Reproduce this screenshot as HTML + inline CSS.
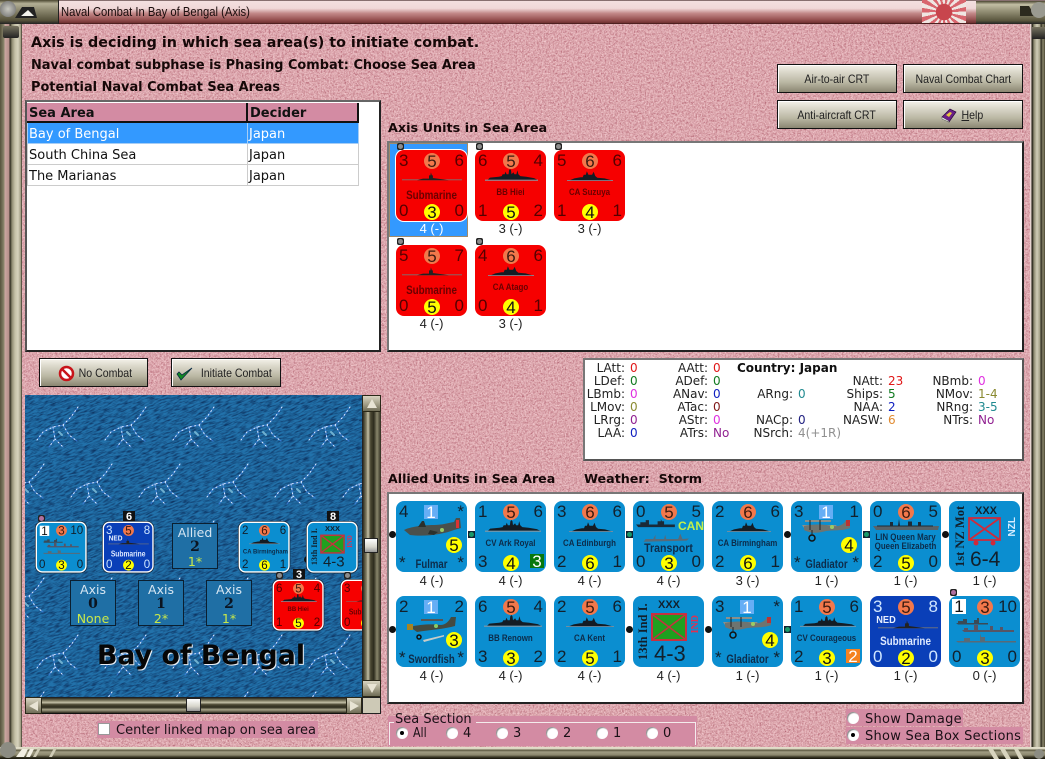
<!DOCTYPE html>
<html><head><meta charset="utf-8"><title>Naval Combat In Bay of Bengal (Axis)</title>
<style>
html,body{margin:0;padding:0;width:1045px;height:759px;overflow:hidden;background:#d9a3a9}
body{position:relative;font:13px "DejaVu Sans","Liberation Sans",sans-serif;color:#111}
.abs,.c,.c span,.c svg,.l,.m,.btn,.box,.flag{position:absolute}
.abs{white-space:nowrap}
.h{font-weight:bold;color:#160808}
.panel{position:absolute;background:#fff;border:2px solid #555;border-top-color:#666;border-right-color:#222;border-bottom-color:#222;box-sizing:border-box}
.btn{box-sizing:border-box;border:1px solid #111;background:linear-gradient(#f4f2ea 0,#dcd9cc 25%,#b9b6a2 65%,#8b8772 100%);box-shadow:inset 1px 1px 0 #fff;font:12px "Liberation Sans",sans-serif;color:#222;text-align:center;line-height:29px}
.btn span{display:inline-block;transform:scaleX(.88);white-space:nowrap;line-height:29px}
.c{width:71px;height:71px;border-radius:8px;background:#0b8ed0;font:17px/18px "Liberation Sans",sans-serif;color:#12202c;overflow:hidden}
.c.r{background:#f60000;color:#500}
.c.b{background:#0a3fb8}
.c.b span.a,.c.b span.t,.c.b span.d,.c.b span.e{color:#cfe6ff}
.a{left:3px;top:2px}.t{right:3px;top:2px}.d{left:3px;bottom:1px}.e{right:3px;bottom:1px}
.o,.y{left:28px;width:16px;height:16px;border-radius:50%;text-align:center;line-height:17px}
.o{top:3px;background:#f2784b;color:#3a1a10}.y{bottom:1px;background:#ff0;color:#111}
.n{left:0;width:71px;text-align:center;font-weight:bold;font-size:9px;line-height:10px;top:41px;color:#0d2c4a;transform:scaleX(.88)}
.r .n{color:#6a0000}
.c .nb{font-size:12px;line-height:12px;top:39px;font-weight:bold;transform:scaleX(.82)}
.pl{bottom:1px;left:0;width:71px;text-align:center;font-weight:bold;font-size:12px;line-height:14px;transform:scaleX(.8);color:#0d2c4a}
.q{left:28px;top:4px;width:14px;height:14px;background:#66aef5;color:#fff;text-align:center;line-height:15px}
.yy{width:16px;height:16px;border-radius:50%;background:#ff0;color:#111;text-align:center;line-height:17px;left:50px;top:36px}
.v{font:bold 12px/12px "Liberation Serif",serif;writing-mode:vertical-rl;transform:rotate(180deg);white-space:nowrap}
.l{width:71px;text-align:center;font:13px/14px "Liberation Sans",sans-serif;color:#222}
.m{width:7px;height:7px;background:#111;border-radius:50%}
.g{width:7px;height:7px;background:#123;border-radius:0;box-shadow:inset 0 0 0 1px #123}
.g::after{content:"";position:absolute;left:1px;top:1px;width:5px;height:5px;background:#1a9a6a;border-radius:50%}
.k{width:7px;height:7px;border-radius:2px;background:#222}
.k::after{content:"";position:absolute;left:1px;top:1px;width:5px;height:5px;background:#8c8c8c;border-radius:50%}
.pu::after{background:#b070a0}
.mini{transform:scale(.68);transform-origin:0 0;box-shadow:0 0 0 2px #fff,0 0 0 3px #123}
.box{box-sizing:border-box;width:46px;height:46px;background:#1f6fa5;border:1px solid #0b1f30;text-align:center;color:#d6e6f2;font:12.5px/15px "DejaVu Sans",sans-serif;padding-top:1px}
.box b{display:block;color:#0b1420;font:bold 14px/15px "DejaVu Serif","Liberation Serif",serif}
.box i{display:block;font-style:normal;color:#c8e84a;font-size:12.5px;line-height:14px}
.nm{position:absolute;width:12px;height:13px;background:#111;color:#fff;text-align:center;font:bold 11px/13px "Liberation Sans",sans-serif}
.i{position:absolute;white-space:nowrap;font:12px/13px "DejaVu Sans",sans-serif;color:#222}
.i u{display:inline-block;width:60px;text-align:right;text-decoration:none;margin-right:5px}
table{border-collapse:separate;border-spacing:0;position:absolute;left:27px;top:103px;width:332px;table-layout:fixed;font:13px "DejaVu Sans",sans-serif}
td,th{box-sizing:border-box;padding:2px 1px 0;text-align:left;overflow:hidden;white-space:nowrap}
td{height:21px;border-right:1px solid #ccc;border-bottom:1px solid #ccc}
td:first-child{border-left:1px solid #ccc}
th{background:#d38ba3;border-right:2px solid #111;border-bottom:2px solid #111;height:20px;font-weight:bold;color:#111;padding-left:2px}
tr.sel td{background:#3399ff;color:#fff;border-color:#a6cdf5}
.rd{position:absolute;width:12px;height:12px;border-radius:50%;background:#fff;box-shadow:inset 1px 1px 1px #888}
.rd.on::after{content:"";position:absolute;left:4px;top:4px;width:4px;height:4px;background:#000;border-radius:50%}
.pk{position:absolute;background:#d38ba3}
.vb{position:absolute;background:linear-gradient(90deg,#2e2c1e,#8a866c 20%,#c5c1a8 28%,#4a4732 42%,#2e2c1e 60%,#8a866c 78%,#2e2c1e);}
.hb{position:absolute;background:linear-gradient(#2e2c1e,#8a866c 20%,#c5c1a8 30%,#4a4732 44%,#2e2c1e 62%,#a8a48a 78%,#2c2a1c);}
.sb{position:absolute;background:linear-gradient(#d9d5c2,#a7a38c 50%,#6f6c56);border:1px solid #2a2818;box-sizing:border-box}
.th{position:absolute;box-sizing:border-box;background:linear-gradient(#fff,#d8d6cc 60%,#999);border:1px solid #222}
</style></head><body>
<svg width="0" height="0" style="position:absolute">
<defs>
<symbol id="sub" viewBox="0 0 60 10"><path d="M0 7.400h60v.8H0z" fill="#777"/><path d="M15 8.200 21 6.600h6V3.400h1.400l.5-3 1 3h1V6l9 1.200 7 1z" fill="#222"/></symbol>
<symbol id="bb" viewBox="0 0 54 10" preserveAspectRatio="none"><path d="M0 8.200h54V9H0z" fill="#8898a4"/><path d="M3 8.200 5 6.600 14 6l3-.5 1-1.500h2l1-2 1 2h2l.5-3 1-1 1 1 .5 3 2-1.500 1 1.500h2l1-3 1 3 2 1.500 6 .5 8 1 3 1.200z" fill="#141c24"/></symbol>
<symbol id="ca" viewBox="0 0 44 10" preserveAspectRatio="none"><path d="M0 8.400h44v.8H0z" fill="#7f8f9c"/><path d="M3 8.400 7 7l6-1h2l1-2h2l1-3 1.500 3H24l1.500-2.500L27 5l2 1.500 7 .5 6 1.400z" fill="#141c24"/></symbol>
<symbol id="lin" viewBox="0 0 66 12"><path d="M0 7h66l-1 4H3z" fill="#596268"/><path d="M4 6.500h56v1H4zM17 3h3v3.500h-3zM35 2.500h4v4h-4zM45 3h3v3.500h-3zM26 0l1 6.500h-2z" fill="#1c2a36"/></symbol>
<symbol id="tr" viewBox="0 0 50 24"><path d="M0 5h36v2.500H2zM4 5V3h5V1h3v4zM20 5V2h3V0l1 2h2v3z" fill="#1a2a38"/><path d="M7 21l40-1 2-2-6 .5-2-5-2 5H28l-1-4-1 4H18v-4l-2 4H9z" fill="#586a78"/></symbol>
<symbol id="pf" viewBox="0 0 58 24"><path d="M0 13c6-3 18-5 30-5 8 0 14-2 20-3l2-4h4l1 10-7 2c-10 4-28 7-44 5z" fill="#4a504c"/><path d="M14 10l4-6h2l2 6zM24 17l6 1 4-3-8-2z" fill="#2b302c"/><circle cx="38" cy="13" r="2" fill="#9c6"/><path d="M52 3h3v8h-3z" fill="#d33"/></symbol>
<symbol id="pg" viewBox="0 0 50 26"><path d="M0 9h34l2 3H2zM3 4h26v2H3z" fill="#8a908c"/><path d="M2 10c8-2 20-2 28 0 6 1 12-1 14-6h4v8c-6 3-18 2-24 3-8 2-14 3-22-1z" fill="#6e7470"/><circle cx="10" cy="22" r="3" fill="none" stroke="#111" stroke-width="1.500"/><path d="M10 14v6M8 4v10M18 4v10" stroke="#222"/><circle cx="30" cy="11" r="2" fill="#9c6"/><path d="M44 4h4v6h-4z" fill="#b33"/></symbol>
<symbol id="ps" viewBox="0 0 52 30"><path d="M3 14c10-3 24-3 30-2 6 0 9-4 11-8h5l-1 9c-10 3-26 4-38 6z" fill="#444a40"/><path d="M14 6h22v2H14z" fill="#555"/><path d="M0 11h6v6H0z" fill="#a88420"/><circle cx="12" cy="24" r="2" fill="none" stroke="#111" stroke-width="1.500"/><path d="M16 27 37 22v1.500L17 29z" fill="#c8ccc8"/><circle cx="29" cy="13" r="2" fill="#8c6"/></symbol>
<symbol id="rs" viewBox="0 0 66 30"><path d="M4 8h32v1.500H6zM6 8V6h5V4h4v4zM22 8V5h3V3h2v5z" fill="#3a4a56"/><path d="M10 15h52v2H12zM12 13h4v2h-4zM22 10h4v5h-4zM38 11h3v4h-3zM48 12h3v3h-3z" fill="#556"/><path d="M4 26h60v1.500H6zM12 26v-3h6v3zM28 26v-8l1 4h4v4z" fill="#5a6a76"/></symbol>
<filter id="nz" x="0" y="0" width="100%" height="100%" color-interpolation-filters="sRGB"><feTurbulence type="fractalNoise" baseFrequency=".75" numOctaves="2" seed="4"/><feColorMatrix values="0 0 0 0 1  0 0 0 0 .86  0 0 0 0 .88  1.600 0 0 0 -.55"/></filter>
<filter id="nz2" x="0" y="0" width="100%" height="100%" color-interpolation-filters="sRGB"><feTurbulence type="fractalNoise" baseFrequency=".45" numOctaves="2" seed="11"/><feColorMatrix values="0 0 0 0 .68  0 0 0 0 .36  0 0 0 0 .42  1.700 0 0 0 -.62"/></filter>
<filter id="wv" x="0" y="0" width="100%" height="100%" color-interpolation-filters="sRGB"><feTurbulence type="fractalNoise" baseFrequency=".15 .7" numOctaves="2" seed="7"/><feColorMatrix values="0 0 0 0 .05  0 0 0 0 .2  0 0 0 0 .38  2.400 0 0 0 -.95"/></filter>
<pattern id="wp" width="300" height="300" patternUnits="userSpaceOnUse" patternTransform="rotate(-22)"><rect width="300" height="300" filter="url(#wv)"/></pattern>
<pattern id="lt" width="68" height="114" patternUnits="userSpaceOnUse" patternTransform="translate(1 8)">
<g id="bolt" fill="none" stroke-linecap="round"><path d="M52 4 45 14 37 22 27 24 17 29 11 37M27 24 29 36 23 44M37 22 43 32 51 38M29 36 37 44" stroke="#3f80dc" stroke-width="1.200" opacity=".8"/><path d="M52 4 45 14 37 22 27 24 17 29 11 37M27 24 29 36 23 44M37 22 43 32 51 38M29 36 37 44" stroke="#dcebff" stroke-width="1" stroke-dasharray="1 3.500"/><path d="M33 29l3 3" stroke="#6fb0d0" stroke-width="2"/></g>
<use href="#bolt" x="34" y="57"/><use href="#bolt" x="-34" y="57"/>
</pattern>
</defs>
</svg>

<!-- background texture -->
<svg class="abs" style="left:0;top:0" width="1045" height="759"><rect width="1045" height="759" filter="url(#nz2)"/><rect width="1045" height="759" filter="url(#nz)"/></svg>

<!-- title bar -->
<div class="abs" style="left:0;top:0;width:1045px;height:24px;background:linear-gradient(#3a2020 0,#f3dfdf 5%,#f0d8d8 35%,#c48a8a 55%,#9a5555 80%,#6e3030 96%,#2a1010 100%)"></div>
<div class="abs" style="left:0;top:0;width:58px;height:24px;background:linear-gradient(#4a4630,#b4b096 15%,#8f8b72 40%,#55513a 85%,#222)"></div>
<div class="abs" style="left:0;top:1px;width:16px;height:16px;border-radius:50%;background:radial-gradient(#c8c8c0,#666)"></div>
<svg class="abs" style="left:14px;top:5px" width="24" height="14"><path d="M1 13 8 2h12l3 11z" fill="#222"/><path d="M7 11 14 5l6 6z" fill="#f4f4ee"/></svg>
<div class="abs" style="left:58px;top:0;width:1px;height:24px;background:#222"></div>
<div class="abs" style="left:61px;top:5px;font:12.500px/14px 'Liberation Sans',sans-serif;color:#1a0d0d;transform:scaleX(.9);transform-origin:0 0">Naval Combat In Bay of Bengal (Axis)</div>
<div class="flag" style="left:922px;top:0;width:44px;height:23px;background:radial-gradient(circle at 22px 12px,#c8454d 0 8px,transparent 8.500px),repeating-conic-gradient(from 5deg at 22px 12px,#d8666e 0 12deg,#efe6e2 12deg 24deg)"></div>
<div class="abs" style="left:976px;top:1px;width:69px;height:23px;background:linear-gradient(#4a4630,#c2bea4 15%,#9a967c 40%,#5a563e 85%,#222)"></div>
<svg class="abs" style="left:1020px;top:2px" width="25" height="20"><path d="M0 4h9l6 10H0z" fill="#2c2a1e"/><circle cx="19" cy="8" r="8" fill="#9a9a90"/></svg>

<!-- frame -->
<div class="abs" style="left:0;top:24px;width:22px;height:723px;background:linear-gradient(90deg,#55513c 0,#8a866c 4px,#caa6a0 5px,#b58f8a 9px,#2c2a1e 10px,#8f8b72 12px,#c5c1a8 15px,#d6d2bc 18px,#9b977e 21px,#1c1a10 22px)"></div>
<div class="abs" style="left:3px;top:26px;width:16px;height:12px;background:linear-gradient(#777360,#222);border-radius:2px"></div>
<div class="abs" style="left:1030px;top:24px;width:15px;height:723px;background:linear-gradient(90deg,#e8d4d0 0,#e8d4d0 1px,#1c1a10 2px,#8f8b72 4px,#d0ccb6 7px,#a19d84 10px,#2c2a1e 11px,#8a866c 13px,#4a4632 15px)"></div>
<div class="abs" style="left:1032px;top:27px;width:13px;height:12px;background:linear-gradient(#777360,#222)"></div>
<div class="abs" style="left:0;top:747px;width:1045px;height:12px;background:linear-gradient(#e4e0cc 0,#dad6c0 2px,#5a563e 3px,#a09c82 5px,#8a866c 8px,#3c3a28 10px,#141208 12px)"></div>
<svg class="abs" style="left:0;top:738px" width="60" height="21"><circle cx="8" cy="12" r="8" fill="#8c8c82"/><path d="M22 11h6l-4 8h-8zM30 11h4l-4 8h-4z" fill="#f2efe2"/><path d="M38 10h3l-5 9h-3zM54 10h3l-5 9h-3z" fill="#cfcbb5"/></svg>
<svg class="abs" style="left:985px;top:745px" width="60" height="14"><path d="M3 4h5l6 10H9zM15 4h5l6 10h-5zM29 4h4l6 10h-5z" fill="#d8d4be"/><circle cx="54" cy="9" r="5" fill="#8c8c82"/></svg>

<!-- headings -->
<div class="abs h" style="left:31px;top:34px;font-size:14.300px;line-height:18px">Axis is deciding in which sea area(s) to initiate combat.</div>
<div class="abs h" style="left:31px;top:57px;font-size:12.900px;line-height:17px">Naval combat subphase is Phasing Combat: Choose Sea Area</div>
<div class="abs h" style="left:31px;top:79px;font-size:12.900px;line-height:17px">Potential Naval Combat Sea Areas</div>

<!-- buttons -->
<div class="btn" style="left:777px;top:64px;width:120px;height:29px"><span>Air-to-air CRT</span></div>
<div class="btn" style="left:903px;top:64px;width:120px;height:29px"><span>Naval Combat Chart</span></div>
<div class="btn" style="left:777px;top:100px;width:120px;height:29px"><span>Anti-aircraft CRT</span></div>
<div class="btn" style="left:903px;top:100px;width:120px;height:29px"><svg style="vertical-align:middle;margin-right:3px" width="16" height="15"><path d="M1 9 9 1l6 3-7 10z" fill="#6a1f88" stroke="#2a0a3a" stroke-width=".7"/><path d="M5 7 9 4l2 1-3 4z" fill="#e8c840"/><path d="M1 9l7 4 0 1-7-3z" fill="#eee" stroke="#333" stroke-width=".4"/></svg><span><u>H</u>elp</span></div>

<!-- sea area list -->
<div class="panel" style="left:25px;top:100px;width:356px;height:252px"></div>
<table><colgroup><col style="width:221px"><col style="width:111px"></colgroup>
<tr><th>Sea Area</th><th>Decider</th></tr>
<tr class="sel"><td>Bay of Bengal</td><td>Japan</td></tr>
<tr><td>South China Sea</td><td>Japan</td></tr>
<tr><td>The Marianas</td><td>Japan</td></tr>
</table>

<!-- axis -->
<div class="abs h" style="left:388px;top:120px;font-size:12.800px;line-height:17px">Axis Units in Sea Area</div>
<div class="panel" style="left:387px;top:141px;width:637px;height:211px;border-color:#777 #222 #222 #777"></div>
<div class="abs" style="left:389px;top:143px;width:79px;height:94px;box-sizing:border-box;background:#3399ff;border:1px solid #a08a6a"></div>
<div class="abs" style="left:395px;top:149px;width:73px;height:73px;background:#fff;border-radius:9px"></div>

<div class="m k" style="left:397px;top:143px"></div><div class="m k" style="left:476px;top:143px"></div><div class="m k" style="left:555px;top:143px"></div><div class="m k" style="left:397px;top:238px"></div><div class="m k" style="left:476px;top:238px"></div>

<div class="c r" style="left:396px;top:150px"><span class="a">3</span><span class="o">5</span><span class="t">6</span><svg style="left:6px;top:22px" width="60" height="10"><use href="#sub"/></svg><span class="n nb">Submarine</span><span class="d">0</span><span class="y">3</span><span class="e">0</span></div>
<div class="l" style="left:396px;top:222px;color:#fff">4 (-)</div>
<div class="c r" style="left:475px;top:150px"><span class="a">6</span><span class="o">5</span><span class="t">4</span><svg style="left:10px;top:19px" width="53" height="13"><use href="#bb"/></svg><span class="n" style="top:37px">BB Hiei</span><span class="d">1</span><span class="y">5</span><span class="e">2</span></div>
<div class="l" style="left:475px;top:222px">3 (-)</div>
<div class="c r" style="left:554px;top:150px"><span class="a">5</span><span class="o">6</span><span class="t">6</span><svg style="left:13px;top:20px" width="46" height="12"><use href="#ca"/></svg><span class="n" style="top:37px">CA Suzuya</span><span class="d">1</span><span class="y">4</span><span class="e">1</span></div>
<div class="l" style="left:554px;top:222px">3 (-)</div>
<div class="c r" style="left:396px;top:245px"><span class="a">5</span><span class="o">5</span><span class="t">7</span><svg style="left:6px;top:22px" width="60" height="10"><use href="#sub"/></svg><span class="n nb">Submarine</span><span class="d">0</span><span class="y">5</span><span class="e">0</span></div>
<div class="l" style="left:396px;top:317px">4 (-)</div>
<div class="c r" style="left:475px;top:245px"><span class="a">4</span><span class="o">6</span><span class="t">6</span><svg style="left:13px;top:20px" width="46" height="12"><use href="#ca"/></svg><span class="n" style="top:37px">CA Atago</span><span class="d">0</span><span class="y">4</span><span class="e">1</span></div>
<div class="l" style="left:475px;top:317px">3 (-)</div>

<!-- combat buttons -->
<div class="btn" style="left:39px;top:358px;width:109px;height:29px"><svg style="vertical-align:middle;margin-right:0;margin-left:6px" width="17" height="17"><circle cx="8.500" cy="8.500" r="6.500" fill="#fff" stroke="#c8141a" stroke-width="2.500"/><path d="M4 4 13 13" stroke="#c8141a" stroke-width="2.500"/></svg><span>No Combat</span></div>
<div class="btn" style="left:171px;top:358px;width:110px;height:29px"><svg style="vertical-align:middle;margin-right:3px" width="17" height="15"><path d="M1 8 5 14 16 2 6 9 3 6z" fill="#118a22" stroke="#0a2a44" stroke-width=".8"/></svg><span>Initiate Combat</span></div>

<!-- map -->
<div class="abs" style="left:25px;top:395px;width:337px;height:302px;overflow:hidden;background:#2272ab">
<svg class="abs" style="left:0;top:0" width="337" height="302"><rect width="337" height="302" fill="url(#wp)"/><rect width="337" height="302" fill="url(#lt)"/></svg>

<div class="m k pu" style="left:13px;top:120px"></div>
<div class="c mini" style="left:12px;top:128px"><span class="a" style="background:#fff;color:#111;width:14px;height:15px;text-align:center;left:4px;top:4px">1</span><span class="o">3</span><span class="t">10</span><svg style="left:5px;top:19px" width="60" height="30"><use href="#rs"/></svg><span class="d">0</span><span class="y">3</span><span class="e">0</span></div>

<div class="nm" style="left:98px;top:116px">6</div>
<div class="c b mini" style="left:79px;top:128px"><span class="a">3</span><span class="o">5</span><span class="t">8</span><span class="n" style="top:18px;left:3px;width:28px;color:#e8f0ff;font-size:11px">NED</span><svg style="left:6px;top:23px" width="60" height="10"><use href="#sub"/></svg><span class="n nb" style="color:#dfeaff">Submarine</span><span class="d">0</span><span class="y">2</span><span class="e">0</span></div>

<div class="box" style="left:147px;top:128px"><span style="color:#d6e6f2">Allied</span><b>2</b><i>1*</i></div>

<div class="c mini" style="left:215px;top:128px"><span class="a">2</span><span class="o">6</span><span class="t">6</span><svg style="left:13px;top:20px" width="46" height="12"><use href="#ca"/></svg><span class="n" style="top:38px;font-size:10px">CA Birmingham</span><span class="d">2</span><span class="y">6</span><span class="e">1</span></div>

<div class="nm" style="left:302px;top:116px">8</div>
<div class="m" style="left:279px;top:161px"></div>
<div class="c mini" style="left:283px;top:128px"><span class="v" style="left:3px;top:6px;height:58px;text-align:center">13th Ind I.</span><span style="left:25px;top:3px;font:bold 11px/12px 'Liberation Sans',sans-serif">XXX</span><span style="left:18px;top:17px;width:36px;height:28px;box-sizing:border-box;background:#1fa01f;border:2px solid #c83040"></span><svg style="left:18px;top:17px" width="36" height="28"><path d="M2 2 34 26M34 2 2 26" stroke="#c83040" stroke-width="2"/></svg><span style="left:22px;top:45px;font:22px/24px 'Liberation Sans',sans-serif">4-3</span><span class="v" style="left:58px;top:18px;color:#e03050;font-size:10px;line-height:10px">IND</span></div>

<div class="m k" style="left:251px;top:177px"></div><div class="nm" style="left:268px;top:174px">3</div><div class="m k" style="left:319px;top:177px"></div>

<div class="box" style="left:45px;top:185px">Axis<b>0</b><i>None</i></div>
<div class="box" style="left:113px;top:185px">Axis<b>1</b><i>2*</i></div>
<div class="box" style="left:181px;top:185px">Axis<b>2</b><i>1*</i></div>

<div class="c r mini" style="left:249px;top:186px"><span class="a">6</span><span class="o">5</span><span class="t">4</span><svg style="left:10px;top:19px" width="53" height="13"><use href="#bb"/></svg><span class="n" style="top:37px;font-size:10px">BB Hiei</span><span class="d">1</span><span class="y">5</span><span class="e">2</span></div>
<div class="c r mini" style="left:317px;top:186px"><span class="a">3</span><span class="o">5</span><span class="t">6</span><svg style="left:6px;top:22px" width="60" height="10"><use href="#sub"/></svg><span class="n nb">Submarine</span><span class="d">0</span><span class="y">3</span><span class="e">0</span></div>

<div class="abs" style="left:72px;top:244px;font:bold 26.800px/34px 'DejaVu Sans',sans-serif;color:#060606;text-shadow:1px 1px 0 #e8eef4">Bay of Bengal</div>
</div>

<!-- scrollbars -->
<div class="vb" style="left:362px;top:395px;width:19px;height:302px;border-left:1px solid #222;box-sizing:border-box"></div>
<div class="sb" style="left:362px;top:395px;width:19px;height:17px"></div>
<svg class="abs" style="left:366px;top:398px" width="12" height="11"><path d="M6 1 11 10H1z" fill="#e8e4d4"/></svg>
<div class="th" style="left:364px;top:538px;width:14px;height:15px"></div>
<div class="sb" style="left:362px;top:680px;width:19px;height:17px"></div>
<svg class="abs" style="left:366px;top:683px" width="12" height="11"><path d="M6 10 11 1H1z" fill="#e8e4d4"/></svg>
<div class="hb" style="left:25px;top:697px;width:337px;height:17px;border-top:1px solid #222;border-bottom:1px solid #111;box-sizing:border-box"></div>
<div class="sb" style="left:25px;top:697px;width:17px;height:17px"></div>
<svg class="abs" style="left:28px;top:700px" width="11" height="12"><path d="M1 6 10 1V11z" fill="#e8e4d4"/></svg>
<div class="th" style="left:186px;top:698px;width:15px;height:14px"></div>
<div class="sb" style="left:346px;top:697px;width:16px;height:17px"></div>
<svg class="abs" style="left:349px;top:700px" width="11" height="12"><path d="M10 6 1 1V11z" fill="#e8e4d4"/></svg>
<div class="abs" style="left:362px;top:697px;width:19px;height:17px;background:#cdc9b6;border:1px solid #222;box-sizing:border-box"></div>

<!-- center linked -->
<div class="pk" style="left:97px;top:721px;width:221px;height:17px"></div>
<div class="abs" style="left:98px;top:723px;width:12px;height:12px;background:#fff;border:1px solid #999;box-sizing:border-box"></div>
<div class="abs" style="left:116px;top:723px;font:13px/15px 'DejaVu Sans',sans-serif;color:#1a1016">Center linked map on sea area</div>

<!-- info panel -->
<div class="panel" style="left:583px;top:358px;width:441px;height:103px;border-color:#777 #555 #555 #777"></div>
<div class="i" style="left:565px;top:362px"><u>LAtt:</u><span style="color:#e01818">0</span></div>
<div class="i" style="left:565px;top:375px"><u>LDef:</u><span style="color:#107a20">0</span></div>
<div class="i" style="left:565px;top:388px"><u>LBmb:</u><span style="color:#e030e0">0</span></div>
<div class="i" style="left:565px;top:401px"><u>LMov:</u><span style="color:#8a8a30">0</span></div>
<div class="i" style="left:565px;top:414px"><u>LRrg:</u><span style="color:#902090">0</span></div>
<div class="i" style="left:565px;top:427px"><u>LAA:</u><span style="color:#1020c0">0</span></div>
<div class="i" style="left:648px;top:362px"><u>AAtt:</u><span style="color:#e01818">0</span></div>
<div class="i" style="left:648px;top:375px"><u>ADef:</u><span style="color:#107a20">0</span></div>
<div class="i" style="left:648px;top:388px"><u>ANav:</u><span style="color:#1020c0">0</span></div>
<div class="i" style="left:648px;top:401px"><u>ATac:</u><span style="color:#801818">0</span></div>
<div class="i" style="left:648px;top:414px"><u>AStr:</u><span style="color:#e030e0">0</span></div>
<div class="i" style="left:648px;top:427px"><u>ATrs:</u><span style="color:#902090">No</span></div>
<div class="i" style="left:737px;top:362px;font-weight:bold;color:#111">Country: Japan</div>
<div class="i" style="left:733px;top:388px"><u>ARng:</u><span style="color:#208a90">0</span></div>
<div class="i" style="left:733px;top:414px"><u>NACp:</u><span style="color:#202080">0</span></div>
<div class="i" style="left:733px;top:427px"><u>NSrch:</u><span style="color:#909090">4(+1R)</span></div>
<div class="i" style="left:823px;top:375px"><u>NAtt:</u><span style="color:#e01818">23</span></div>
<div class="i" style="left:823px;top:388px"><u>Ships:</u><span style="color:#107a20">5</span></div>
<div class="i" style="left:823px;top:401px"><u>NAA:</u><span style="color:#1020c0">2</span></div>
<div class="i" style="left:823px;top:414px"><u>NASW:</u><span style="color:#e08a30">6</span></div>
<div class="i" style="left:913px;top:375px"><u>NBmb:</u><span style="color:#e030e0">0</span></div>
<div class="i" style="left:913px;top:388px"><u>NMov:</u><span style="color:#8a8a30">1-4</span></div>
<div class="i" style="left:913px;top:401px"><u>NRng:</u><span style="color:#208a90">3-5</span></div>
<div class="i" style="left:913px;top:414px"><u>NTrs:</u><span style="color:#902090">No</span></div>

<div class="abs h" style="left:388px;top:470px;font-size:12.600px;line-height:17px">Allied Units in Sea Area</div>
<div class="abs h" style="left:584px;top:470px;font-size:12.700px;line-height:17px;white-space:pre">Weather:  Storm</div>

<!-- allied -->
<div class="panel" style="left:387px;top:492px;width:637px;height:212px;border-color:#777 #222 #222 #777"></div>

<div class="m" style="left:389px;top:531px"></div><div class="m g" style="left:468px;top:531px"></div><div class="m g" style="left:626px;top:531px"></div><div class="m" style="left:784px;top:531px"></div><div class="m g" style="left:863px;top:531px"></div><div class="m" style="left:942px;top:531px"></div><div class="m k pu" style="left:950px;top:589px"></div>
<div class="m" style="left:389px;top:626px"></div><div class="m" style="left:626px;top:626px"></div><div class="m" style="left:705px;top:626px"></div><div class="m g" style="left:784px;top:626px"></div>

<div class="c" style="left:396px;top:501px"><span class="a">4</span><span class="q">1</span><span class="t">*</span><svg style="left:8px;top:16px" width="58" height="24"><use href="#pf"/></svg><span class="yy">5</span><span class="d" style="bottom:0">*</span><span class="e" style="bottom:0">*</span><span class="pl">Fulmar</span></div>
<div class="l" style="left:396px;top:574px">4 (-)</div>
<div class="c" style="left:475px;top:501px"><span class="a">1</span><span class="o">5</span><span class="t">6</span><svg style="left:10px;top:19px" width="56" height="13"><use href="#bb"/></svg><span class="n" style="top:37px">CV Ark Royal</span><span class="d">3</span><span class="y">4</span><span style="left:55px;bottom:4px;width:14px;height:14px;background:#08780c;color:#fff;text-align:center;line-height:15px">3</span></div>
<div class="l" style="left:475px;top:574px">4 (-)</div>
<div class="c" style="left:554px;top:501px"><span class="a">3</span><span class="o">6</span><span class="t">6</span><svg style="left:15px;top:20px" width="44" height="12"><use href="#ca"/></svg><span class="n" style="top:37px">CA Edinburgh</span><span class="d">2</span><span class="y">6</span><span class="e">1</span></div>
<div class="l" style="left:554px;top:574px">4 (-)</div>
<div class="c" style="left:633px;top:501px"><span class="a">0</span><span class="o">5</span><span class="t">5</span><span style="right:0;top:18px;font:bold 12px/14px 'Liberation Sans',sans-serif;color:#c4f04a">CAN</span><svg style="left:3px;top:18px" width="54" height="26"><use href="#tr"/></svg><span class="n" style="top:42px;font-size:12px;font-weight:bold">Transport</span><span class="d">0</span><span class="y">3</span><span class="e">0</span></div>
<div class="l" style="left:633px;top:574px">4 (-)</div>
<div class="c" style="left:712px;top:501px"><span class="a">2</span><span class="o">6</span><span class="t">6</span><svg style="left:15px;top:20px" width="44" height="12"><use href="#ca"/></svg><span class="n" style="top:37px">CA Birmingham</span><span class="d">2</span><span class="y">6</span><span class="e">1</span></div>
<div class="l" style="left:712px;top:574px">3 (-)</div>
<div class="c" style="left:791px;top:501px"><span class="a">3</span><span class="q">1</span><span class="t">1</span><svg style="left:11px;top:15px" width="50" height="26"><use href="#pg"/></svg><span class="yy">4</span><span class="d" style="bottom:0">*</span><span class="e" style="bottom:0">*</span><span class="pl">Gladiator</span></div>
<div class="l" style="left:791px;top:574px">1 (-)</div>
<div class="c" style="left:870px;top:501px"><span class="a">0</span><span class="o">6</span><span class="t">5</span><svg style="left:3px;top:18px" width="66" height="12"><use href="#lin"/></svg><span class="n" style="top:32px;line-height:9px;font-size:9px">LIN Queen Mary<br>Queen Elizabeth</span><span class="d">2</span><span class="y">5</span><span class="e">0</span></div>
<div class="l" style="left:870px;top:574px">1 (-)</div>
<div class="c" style="left:949px;top:501px"><span class="v" style="left:5px;top:6px;height:60px;font-size:12.500px;text-align:center">1st NZ Mot</span><span style="left:26px;top:4px;font:bold 11px/12px 'Liberation Sans',sans-serif">XXX</span><svg style="left:19px;top:16px" width="33" height="30"><path d="M1 1H32V23H1zM1 1 32 23M32 1 1 23" fill="none" stroke="#d02a3a" stroke-width="1.700"/><circle cx="8" cy="26" r="2.500" fill="#d02a3a"/><circle cx="25" cy="26" r="2.500" fill="#d02a3a"/></svg><span style="left:21px;top:47px;font:21px/24px 'Liberation Sans',sans-serif">6-4</span><span class="v" style="left:59px;top:16px;color:#d4ecff;font:bold 10px/10px 'Liberation Sans',sans-serif">NZL</span></div>
<div class="l" style="left:949px;top:574px">1 (-)</div>

<div class="c" style="left:396px;top:596px"><span class="a">2</span><span class="q">1</span><span class="t">2</span><svg style="left:11px;top:17px" width="52" height="30"><use href="#ps"/></svg><span class="yy">3</span><span class="d" style="bottom:0">*</span><span class="e" style="bottom:0">*</span><span class="pl">Swordfish</span></div>
<div class="l" style="left:396px;top:669px">4 (-)</div>
<div class="c" style="left:475px;top:596px"><span class="a">6</span><span class="o">5</span><span class="t">4</span><svg style="left:9px;top:19px" width="58" height="13"><use href="#bb"/></svg><span class="n" style="top:37px">BB Renown</span><span class="d">3</span><span class="y">3</span><span class="e">2</span></div>
<div class="l" style="left:475px;top:669px">4 (-)</div>
<div class="c" style="left:554px;top:596px"><span class="a">2</span><span class="o">5</span><span class="t">6</span><svg style="left:12px;top:20px" width="48" height="12"><use href="#ca"/></svg><span class="n" style="top:37px">CA Kent</span><span class="d">2</span><span class="y">5</span><span class="e">1</span></div>
<div class="l" style="left:554px;top:669px">4 (-)</div>
<div class="c" style="left:633px;top:596px"><span class="v" style="left:4px;top:7px;height:58px;text-align:center;font-size:12.500px">13th Ind I.</span><span style="left:25px;top:3px;font:bold 11px/12px 'Liberation Sans',sans-serif">XXX</span><span style="left:18px;top:17px;width:36px;height:28px;box-sizing:border-box;background:#1fa01f;border:2px solid #c83040"></span><svg style="left:18px;top:17px" width="36" height="28"><path d="M2 2 34 26M34 2 2 26" stroke="#c83040" stroke-width="1.500"/></svg><span style="left:21px;top:46px;font:22px/24px 'Liberation Sans',sans-serif">4-3</span><span class="v" style="left:58px;top:19px;color:#e03050;font-size:10px;line-height:10px">IND</span></div>
<div class="l" style="left:633px;top:669px">4 (-)</div>
<div class="c" style="left:712px;top:596px"><span class="a">3</span><span class="q">1</span><span class="t">*</span><svg style="left:11px;top:17px" width="50" height="26"><use href="#pg"/></svg><span class="yy">4</span><span class="d" style="bottom:0">*</span><span class="e" style="bottom:0">*</span><span class="pl">Gladiator</span></div>
<div class="l" style="left:712px;top:669px">1 (-)</div>
<div class="c" style="left:791px;top:596px"><span class="a">1</span><span class="o">5</span><span class="t">6</span><svg style="left:9px;top:20px" width="56" height="12"><use href="#bb"/></svg><span class="n" style="top:37px">CV Courageous</span><span class="d">2</span><span class="y">3</span><span style="left:55px;bottom:4px;width:14px;height:14px;background:#f5821f;color:#fff;text-align:center;line-height:15px">2</span></div>
<div class="l" style="left:791px;top:669px">1 (-)</div>
<div class="c b" style="left:870px;top:596px"><span class="a">3</span><span class="o">5</span><span class="t">8</span><span class="n" style="top:19px;left:3px;width:26px;color:#e8f0ff;font-size:10.500px">NED</span><svg style="left:8px;top:24px" width="60" height="10"><use href="#sub"/></svg><span class="n nb" style="color:#dfeaff">Submarine</span><span class="d">0</span><span class="y">2</span><span class="e">0</span></div>
<div class="l" style="left:870px;top:669px">1 (-)</div>
<div class="c" style="left:949px;top:596px"><span class="a" style="background:#fff;color:#111;width:14px;height:15px;text-align:center;left:3px;top:3px;line-height:16px">1</span><span class="o">3</span><span class="t">10</span><svg style="left:3px;top:19px" width="66" height="30"><use href="#rs"/></svg><span class="d">0</span><span class="y">3</span><span class="e">0</span></div>
<div class="l" style="left:949px;top:669px">0 (-)</div>

<!-- sea section -->
<div class="pk" style="left:388px;top:716px;width:309px;height:30px"></div>
<div class="abs" style="left:389px;top:722px;width:307px;height:23px;box-sizing:border-box;border:1px solid #f4ecec;border-bottom:none"></div>
<div class="pk" style="left:394px;top:717px;width:82px;height:10px"></div>
<div class="abs" style="left:395px;top:712px;font:13px/15px 'DejaVu Sans',sans-serif;color:#1a1016">Sea Section</div>
<div class="rd on" style="left:396px;top:727px"></div><div class="abs" style="left:413px;top:726px;font:13px/15px 'DejaVu Sans',sans-serif;color:#1a1016;transform:scaleX(.85);transform-origin:0 0">All</div>
<div class="rd" style="left:446px;top:727px"></div><div class="abs" style="left:463px;top:726px;font:13px/15px 'DejaVu Sans',sans-serif;color:#1a1016">4</div>
<div class="rd" style="left:496px;top:727px"></div><div class="abs" style="left:513px;top:726px;font:13px/15px 'DejaVu Sans',sans-serif;color:#1a1016">3</div>
<div class="rd" style="left:546px;top:727px"></div><div class="abs" style="left:563px;top:726px;font:13px/15px 'DejaVu Sans',sans-serif;color:#1a1016">2</div>
<div class="rd" style="left:596px;top:727px"></div><div class="abs" style="left:613px;top:726px;font:13px/15px 'DejaVu Sans',sans-serif;color:#1a1016">1</div>
<div class="rd" style="left:646px;top:727px"></div><div class="abs" style="left:663px;top:726px;font:13px/15px 'DejaVu Sans',sans-serif;color:#1a1016">0</div>

<!-- right radios -->
<div class="pk" style="left:846px;top:709px;width:117px;height:17px"></div>
<div class="pk" style="left:846px;top:727px;width:177px;height:17px"></div>
<div class="rd" style="left:847px;top:712px"></div><div class="abs" style="left:865px;top:712px;font:13px/15px 'DejaVu Sans',sans-serif;letter-spacing:.25px;color:#1a1016">Show Damage</div>
<div class="rd on" style="left:847px;top:729px"></div><div class="abs" style="left:865px;top:729px;font:13px/15px 'DejaVu Sans',sans-serif;letter-spacing:.25px;color:#1a1016">Show Sea Box Sections</div>
</body></html>
